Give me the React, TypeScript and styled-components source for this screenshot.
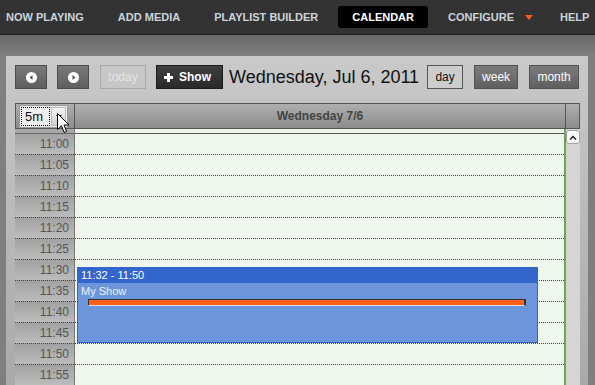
import React from 'react';
import styled, { createGlobalStyle } from 'styled-components';

const GlobalStyle = createGlobalStyle`
  html, body { margin: 0; padding: 0; overflow: hidden; }
  body { background: #7f7f7f; font-family: "Liberation Sans", Arial, sans-serif; }
  * { box-sizing: border-box; }
`;

const Page = styled.div`
  position: relative;
  width: 595px;
  height: 385px;
  overflow: hidden;
  display: flex;
  flex-direction: column;
  background: #7f7f7f;
`;

const Nav = styled.nav`
  flex: none;
  height: 35px;
  background: #333;
  border-bottom: 1px solid #1f1f1f;
  display: flex;
  align-items: center;
  gap: 6px;
`;

const NavItem = styled.div<{ $active?: boolean; $padRight?: number }>`
  display: flex;
  align-items: center;
  flex: none;
  height: 22px;
  padding: 0 ${(p) => (p.$padRight ?? 14)}px 0 14px;
  border-radius: 3px;
  font-size: 11px;
  font-weight: bold;
  white-space: nowrap;
  color: ${(p) => (p.$active ? '#ffffff' : '#cdd3da')};
  background: ${(p) => (p.$active ? '#000' : 'transparent')};
  &:first-child { padding-left: 6px; }
`;

const Caret = styled.span`
  margin-left: 11px;
  width: 0;
  height: 0;
  border-left: 4px solid transparent;
  border-right: 4px solid transparent;
  border-top: 5px solid #ff5a1a;
`;

const Strip = styled.div`
  flex: none;
  height: 21px;
  background: linear-gradient(#696969, #7e7e7e);
`;

const Panel = styled.div`
  flex: 1;
  min-height: 0;
  margin: 0 7px 0 6px;
  padding: 9px 8px 0 9px;
  background: linear-gradient(#c9c9c9, #a9a9a9);
  display: flex;
  flex-direction: column;
`;

const Toolbar = styled.div`
  flex: none;
  width: 565px;
  height: 24px;
  display: flex;
  align-items: center;
  gap: 10px;
  & > * { flex: none; }
`;

const ArrowBtn = styled.div`
  width: 32px;
  height: 24px;
  border: 1px solid #4c4c4c;
  background: linear-gradient(#797979, #5f5f5f);
  display: flex;
  align-items: center;
  justify-content: center;
`;

const TodayBtn = styled.div`
  width: 46px;
  height: 24px;
  margin-left: 1px;
  border: 1px solid #a9a9a9;
  color: #e3e3e3;
  font-size: 12px;
  display: flex;
  align-items: center;
  justify-content: center;
`;

const ShowBtn = styled.div`
  width: 67px;
  height: 24px;
  border: 1px solid #1c1c1c;
  background: linear-gradient(#404040, #292929);
  color: #fff;
  font-size: 12px;
  font-weight: bold;
  display: flex;
  align-items: center;
  gap: 6px;
  padding-left: 7px;
`;

const Title = styled.div`
  margin-left: -4px;
  font-size: 18px;
  color: #111;
  white-space: nowrap;
`;

const ViewGroup = styled.div`
  margin-left: -2px;
  display: flex;
  gap: 11px;
`;

const ViewBtn = styled.div<{ $active?: boolean; $w: number }>`
  width: ${(p) => p.$w}px;
  height: 24px;
  font-size: 12px;
  display: flex;
  align-items: center;
  justify-content: center;
  border: 1px solid ${(p) => (p.$active ? '#555' : '#515151')};
  color: ${(p) => (p.$active ? '#111' : '#fff')};
  background: ${(p) => (p.$active ? '#cdcdcd' : 'linear-gradient(#7c7c7c, #5f5f5f)')};
`;

const Calendar = styled.div`
  margin-top: 14px;
  width: 565px;
  flex: 1;
  min-height: 0;
  display: flex;
  flex-direction: column;
`;

const Header = styled.div`
  flex: none;
  display: flex;
  height: 26px;
`;

const HeadCell = styled.div<{ $w?: number; $left?: boolean; $right?: boolean }>`
  height: 26px;
  ${(p) => (p.$w ? `width: ${p.$w}px; flex: none;` : 'flex: 1;')}
  border-top: 1px solid #555;
  border-bottom: 1px solid #555;
  ${(p) => (p.$left ? 'border-left: 1px solid #555;' : '')}
  ${(p) => (p.$right ? 'border-right: 1px solid #555;' : '')}
  background: linear-gradient(#afafaf, #8b8b8b);
  display: flex;
  align-items: center;
  justify-content: center;
  font-size: 12px;
  font-weight: bold;
  color: #444;
`;

const SelectCell = styled(HeadCell)`
  justify-content: flex-start;
  padding-left: 3px;
`;

const SelectBox = styled.div`
  width: 49px;
  height: 23px;
  border: 1px solid #9b9b9b;
  background: #ededed;
  display: flex;
  align-items: stretch;
  padding: 1px;
`;

const SelectValue = styled.div`
  flex: 1;
  border: 1px dotted #000;
  font-size: 13px;
  font-weight: normal;
  color: #111;
  padding-left: 3px;
  display: flex;
  align-items: center;
`;

const SelectButton = styled.div`
  width: 15px;
  margin-left: 1px;
  background: linear-gradient(#f4f4f4, #cfcfcf);
  border: 1px solid #bdbdbd;
  display: flex;
  align-items: center;
  justify-content: center;
`;

const DownTri = styled.span`
  width: 0;
  height: 0;
  border-left: 3px solid transparent;
  border-right: 3px solid transparent;
  border-top: 3px solid #000;
`;

const Body = styled.div`
  flex: 1;
  min-height: 0;
  display: flex;
`;

const LabelCol = styled.div`
  width: 60px;
  flex: none;
  border-right: 1px solid #777;
  background: #a8a8a8;
  padding-top: 4px;
`;

const LabelList = styled.div`
  border-top: 1px solid #666;
`;

const LabelCell = styled.div`
  height: 21px;
  border-bottom: 1px dotted #444;
  background: linear-gradient(#a2a2a2, #bcbcbc);
  text-align: right;
  padding-right: 5px;
  font-size: 12px;
  line-height: 20px;
  color: #555;
`;

const MainCol = styled.div`
  flex: 1;
  position: relative;
  border-right: 2px solid #6aa84f;
  background: #eff6ec;
  padding-top: 4px;
`;

const RowList = styled.div`
  border-top: 1px solid #555;
`;

const Row = styled.div`
  height: 21px;
  border-bottom: 1px dotted #444;
`;

const ScrollCol = styled.div`
  width: 14px;
  flex: none;
  background: #d5d5d5;
  padding-top: 1px;
`;

const UpBtn = styled.div`
  height: 14px;
  background: #f7f7f7;
  border: 1px solid #a3a3a3;
  border-radius: 3px;
  display: flex;
  align-items: center;
  justify-content: center;
`;

const Event = styled.div`
  position: absolute;
  top: 138px;
  left: 2px;
  width: 461px;
  height: 76px;
  border: 1px solid #3366cc;
  background: #6d95dc;
`;

const EventHead = styled.div`
  height: 15px;
  background: #3366cc;
  color: #fff;
  font-size: 11px;
  line-height: 15px;
  padding-left: 3px;
`;

const EventBody = styled.div`
  padding: 1px 3px;
`;

const EventTitle = styled.div`
  font-size: 11px;
  line-height: 14px;
  color: #f0f0f0;
`;

const ProgressBar = styled.div`
  margin: 1px 0 0 7px;
  width: 438px;
  height: 7px;
  background: #ff6119;
  border-top: 1px solid #333;
  border-left: 1px solid #333;
  border-right: 2px solid #333;
  border-bottom: 1px solid #e0e0e0;
`;

const Cursor = styled.svg`
  position: absolute;
  left: 57px;
  top: 113px;
`;

const CircleArrow = ({ dir }: { dir: 'l' | 'r' }) => (
  <svg width="11" height="11" viewBox="0 0 11 11">
    <circle cx="5.5" cy="5.5" r="5.5" fill="#fff" />
    {dir === 'l' ? (
      <polygon points="6.5,3 3.5,5.5 6.5,8" fill="#555" />
    ) : (
      <polygon points="4.5,3 7.5,5.5 4.5,8" fill="#555" />
    )}
  </svg>
);

const Plus = () => (
  <svg width="9" height="9" viewBox="0 0 9 9">
    <rect x="3" y="0" width="3" height="9" fill="#fff" />
    <rect x="0" y="3" width="9" height="3" fill="#fff" />
  </svg>
);

const times = ['11:00', '11:05', '11:10', '11:15', '11:20', '11:25', '11:30', '11:35', '11:40', '11:45', '11:50', '11:55'];

export default function App() {
  return (
    <Page>
      <GlobalStyle />
      <Nav>
        <NavItem>NOW PLAYING</NavItem>
        <NavItem>ADD MEDIA</NavItem>
        <NavItem>PLAYLIST BUILDER</NavItem>
        <NavItem $active>CALENDAR</NavItem>
        <NavItem $padRight={7}>
          CONFIGURE
          <Caret />
        </NavItem>
        <NavItem>HELP</NavItem>
      </Nav>
      <Strip />
      <Panel>
        <Toolbar>
          <ArrowBtn>
            <CircleArrow dir="l" />
          </ArrowBtn>
          <ArrowBtn>
            <CircleArrow dir="r" />
          </ArrowBtn>
          <TodayBtn>today</TodayBtn>
          <ShowBtn>
            <Plus />
            Show
          </ShowBtn>
          <Title>Wednesday, Jul 6, 2011</Title>
          <ViewGroup>
            <ViewBtn $active $w={36}>day</ViewBtn>
            <ViewBtn $w={44}>week</ViewBtn>
            <ViewBtn $w={50}>month</ViewBtn>
          </ViewGroup>
        </Toolbar>
        <Calendar>
          <Header>
            <SelectCell $w={60} $left $right>
              <SelectBox>
                <SelectValue>5m</SelectValue>
                <SelectButton>
                  <DownTri />
                </SelectButton>
              </SelectBox>
            </SelectCell>
            <HeadCell>Wednesday 7/6</HeadCell>
            <HeadCell $w={15} $left $right />
          </Header>
          <Body>
            <LabelCol>
              <LabelList>
                {times.map((t) => (
                  <LabelCell key={t}>{t}</LabelCell>
                ))}
              </LabelList>
            </LabelCol>
            <MainCol>
              <RowList>
                {times.map((t) => (
                  <Row key={t} />
                ))}
              </RowList>
              <Event>
                <EventHead>11:32 - 11:50</EventHead>
                <EventBody>
                  <EventTitle>My Show</EventTitle>
                  <ProgressBar />
                </EventBody>
              </Event>
            </MainCol>
            <ScrollCol>
              <UpBtn>
                <svg width="8" height="5" viewBox="0 0 8 5">
                  <polyline points="1,4.5 4,1.5 7,4.5" fill="none" stroke="#222" strokeWidth="1.5" />
                </svg>
              </UpBtn>
            </ScrollCol>
          </Body>
        </Calendar>
      </Panel>
      <Cursor width="13" height="21" viewBox="0 0 13 21">
        <path d="M0.5,0.5 L0.5,16.5 L4.5,12.8 L7.2,19.5 L9.6,18.5 L7,12 L12,12 Z" fill="#fff" stroke="#000" strokeWidth="1" strokeLinejoin="round" />
      </Cursor>
    </Page>
  );
}
